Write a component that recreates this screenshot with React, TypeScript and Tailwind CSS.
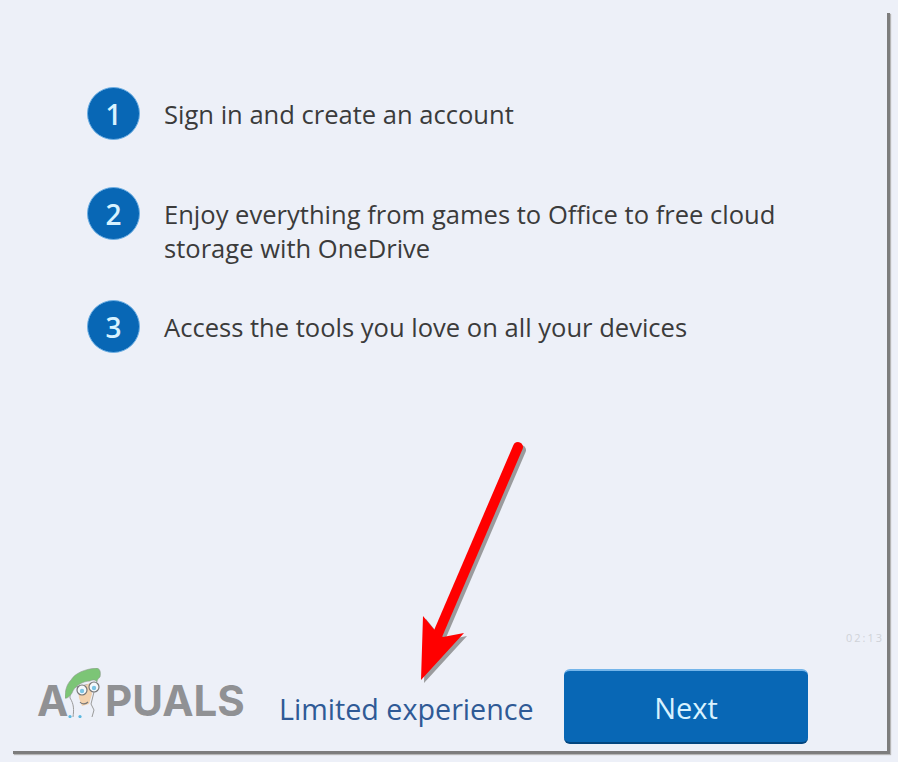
const steps = [
  { n: "1", lines: ["Sign in and create an account"], box: "h-[53px] mb-[47px]" },
  { n: "2", lines: ["Enjoy everything from games to Office to free cloud", "storage with OneDrive"], box: "h-[53px] mb-[60px]" },
  { n: "3", lines: ["Access the tools you love on all your devices"], box: "h-[53px]" },
]

function Mascot() {
  return (
    <svg width="36" height="50" viewBox="0 0 36 50" className="absolute left-[28px] top-0">
      <path d="M8 49 C9 42 9 36 5 30 L5 20 L26 16 L29 24 L26 36 L29 42 L27 49" fill="#edf0f8" stroke="#9a9a9a" strokeWidth="1" />
      <path d="M13 21 L25 15 L27 26 L24 36 L17 38 L14 30 Z" fill="#f3d2ae" />
      <path d="M0 30 C0 22 2 16 6 12 C10 5 20 1 32 0 C35 1 36 4 35 9 C33 11 32 12 32 14 C30 11 27 12 25 13 C17 13 9 19 7 25 C5 28 2 31 0 30 Z" fill="#7cc576" stroke="#8f9a8f" strokeWidth="0.6" />
      <circle cx="17" cy="22" r="5" fill="#f4f8fb" stroke="#777" strokeWidth="1.2" />
      <circle cx="29" cy="19" r="5" fill="#f4f8fb" stroke="#777" strokeWidth="1.2" />
      <circle cx="17" cy="23" r="2.2" fill="#7cc4e4" />
      <circle cx="29" cy="20" r="2.2" fill="#7cc4e4" />
      <path d="M15 34 C17 37 21 36 23 34" fill="none" stroke="#777" strokeWidth="1.2" />
      <circle cx="5" cy="48.5" r="1.6" fill="#5bb8e0" />
      <circle cx="15" cy="48.5" r="1.6" fill="#5bb8e0" />
    </svg>
  )
}

export default function App() {
  return (
    <div className="relative w-[898px] h-[762px] bg-[#edf0f8] pl-[13px] pt-[13px] overflow-hidden font-['Open_Sans',sans-serif]">
      <div className="flex flex-col w-[877px] h-[741px] border-r-[3px] border-b-[3px] border-[#7d7d7d] shadow-[1px_1px_1px_#b5b5b5] pl-[74px] pt-[74px]">
        {steps.map(s => (
          <div key={s.n} className={`flex ${s.box}`}>
            <div className="w-[53px] h-[53px] shrink-0 rounded-full bg-[#0867b5] border border-[#6fb0e4] flex items-center justify-center text-[#d8f2ff] text-[28px] font-semibold">
              {s.n}
            </div>
            <div className="ml-[24px] pt-[10px] text-[25.55px] leading-[34px] text-[#3b3b3b] whitespace-nowrap">
              {s.lines.map(l => <div key={l}>{l}</div>)}
            </div>
          </div>
        ))}

        <div className="mt-auto mb-[7px] -ml-[50px] flex items-start">
          <div className="relative w-[206px] h-[50px] -mt-[1px] shrink-0 text-[#909194] font-['Inter',sans-serif] font-bold text-[42px] leading-[42px]">
            <span className="absolute left-0 bottom-[-4px]">A</span>
            <span className="absolute left-[68px] bottom-[-4px]">PUALS</span>
            <Mascot />
          </div>
          <div className="ml-[36px] w-[285px] shrink-0 mt-[21px] text-[28.7px] leading-[38px] text-[#2f5a96] whitespace-nowrap">Limited experience</div>
          <button className="w-[244px] h-[75px] pt-[3px] rounded-[6px] bg-[#0867b5] border-t-2 border-t-[#74b5ea] border-b-2 border-b-[#03467f] text-[#d8f2ff] text-[29px] font-medium">
            Next
          </button>
        </div>
      </div>

      <div className="absolute left-[846px] top-[631px] text-[11px] leading-[14px] tracking-[2px] text-[#d0d3d9]">02:13</div>

      <svg width="130" height="250" viewBox="0 0 130 250" className="absolute left-[410px] top-[440px]">
        <g fill="#7f7f7f" opacity="0.75" transform="translate(3 3)">
          <path d="M108 7 L27 196" stroke="#7f7f7f" strokeWidth="10" strokeLinecap="round" />
          <path d="M11 240 L13 176 L27 193 L33 197 L54 193 Z" />
        </g>
        <path d="M108 7 L27 196" stroke="#ff0000" strokeWidth="10" strokeLinecap="round" />
        <path d="M11 240 L13 176 L27 193 L33 197 L54 193 Z" fill="#ff0000" />
      </svg>
    </div>
  )
}
